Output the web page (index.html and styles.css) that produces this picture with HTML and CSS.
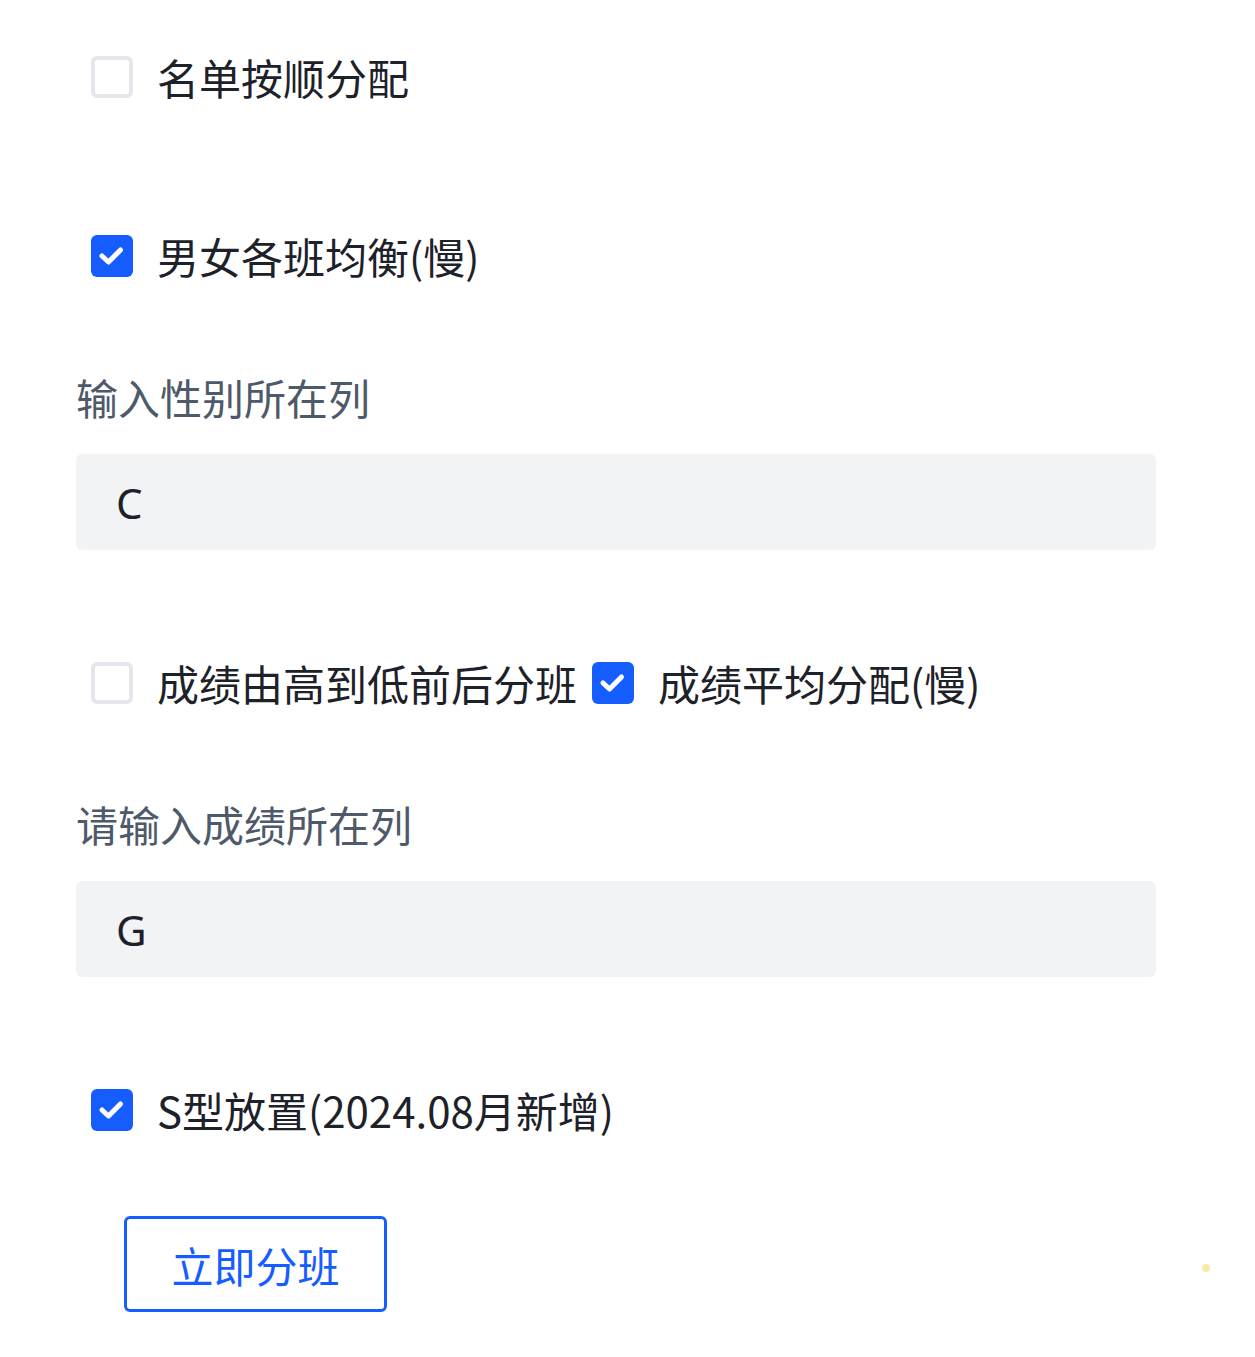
FILE: index.html
```html
<!DOCTYPE html>
<html lang="zh-CN">
<head>
<meta charset="utf-8">
<title>分班</title>
<link rel="stylesheet" href="styles.css">
</head>
<body>
<div class="page">
  <div class="check-row row-first">
    <label class="check-item">
      <span class="box"></span>
      <span class="check-text">名单按顺分配</span>
    </label>
  </div>

  <div class="check-row row-second">
    <label class="check-item">
      <span class="box checked"><svg viewBox="0 0 42 42" class="tick"><path d="M11 21 L17.5 27 L29.5 15"/></svg></span>
      <span class="check-text">男女各班均衡(慢)</span>
    </label>
  </div>

  <div class="field">
    <div class="field-label">输入性别所在列</div>
    <div class="input">C</div>
  </div>

  <div class="check-row row-after-input">
    <label class="check-item">
      <span class="box"></span>
      <span class="check-text">成绩由高到低前后分班</span>
    </label>
    <label class="check-item">
      <span class="box checked"><svg viewBox="0 0 42 42" class="tick"><path d="M11 21 L17.5 27 L29.5 15"/></svg></span>
      <span class="check-text">成绩平均分配(慢)</span>
    </label>
  </div>

  <div class="field">
    <div class="field-label">请输入成绩所在列</div>
    <div class="input">G</div>
  </div>

  <div class="check-row row-after-input">
    <label class="check-item">
      <span class="box checked"><svg viewBox="0 0 42 42" class="tick"><path d="M11 21 L17.5 27 L29.5 15"/></svg></span>
      <span class="check-text">S型放置(2024.08月新增)</span>
    </label>
  </div>

  <div class="actions">
    <button class="btn" type="button">立即分班</button>
  </div>

  <span class="dot"></span>
</div>
</body>
</html>
```

FILE: styles.css
```css
* { box-sizing: border-box; }

html, body {
  margin: 0;
  padding: 0;
  background: #ffffff;
}

body {
  font-family: "Noto Sans CJK SC", "Noto Sans", sans-serif;
  font-size: 42px;
  color: #1d2129;
}

.page {
  position: relative;
  padding: 45px 99px 46px 76px;
  min-height: 1357px;
}

.check-row {
  display: flex;
  align-items: center;
  height: 63px;
  padding-left: 15px;
}

.row-second { margin-top: 116px; }
.row-after-input { margin-top: 101px; }

.check-item {
  display: flex;
  align-items: center;
  gap: 24px;
  margin-right: 15px;
  line-height: 59px;
  white-space: nowrap;
}

.box {
  width: 42px;
  height: 42px;
  border: 4px solid #e5e6eb;
  border-radius: 6px;
  background: #ffffff;
  flex: none;
  display: flex;
}

.box.checked {
  border-color: #165dff;
  background: #165dff;
  border-width: 0;
}

.tick {
  width: 42px;
  height: 42px;
}

.tick path {
  fill: none;
  stroke: #ffffff;
  stroke-width: 5;
  stroke-linecap: round;
  stroke-linejoin: round;
}

.field { margin-top: 78px; }

.field-label {
  line-height: 63px;
  color: #4e5969;
}

.input {
  margin-top: 26px;
  height: 96px;
  background: #f2f3f5;
  border-radius: 6px;
  padding-left: 40px;
  display: flex;
  align-items: center;
  font-family: "Noto Sans", sans-serif;
  color: #1d2129;
}

.actions {
  margin-top: 75px;
  padding-left: 48px;
}

.btn {
  width: 263px;
  height: 96px;
  border: 3px solid #165dff;
  border-radius: 6px;
  background: #ffffff;
  color: #165dff;
  font-family: "Noto Sans CJK SC", "Noto Sans", sans-serif;
  font-size: 42px;
  padding: 0;
  cursor: pointer;
}

.dot {
  position: absolute;
  left: 1202px;
  top: 1264px;
  width: 8px;
  height: 8px;
  border-radius: 50%;
  background: #fde9a6;
}
```
